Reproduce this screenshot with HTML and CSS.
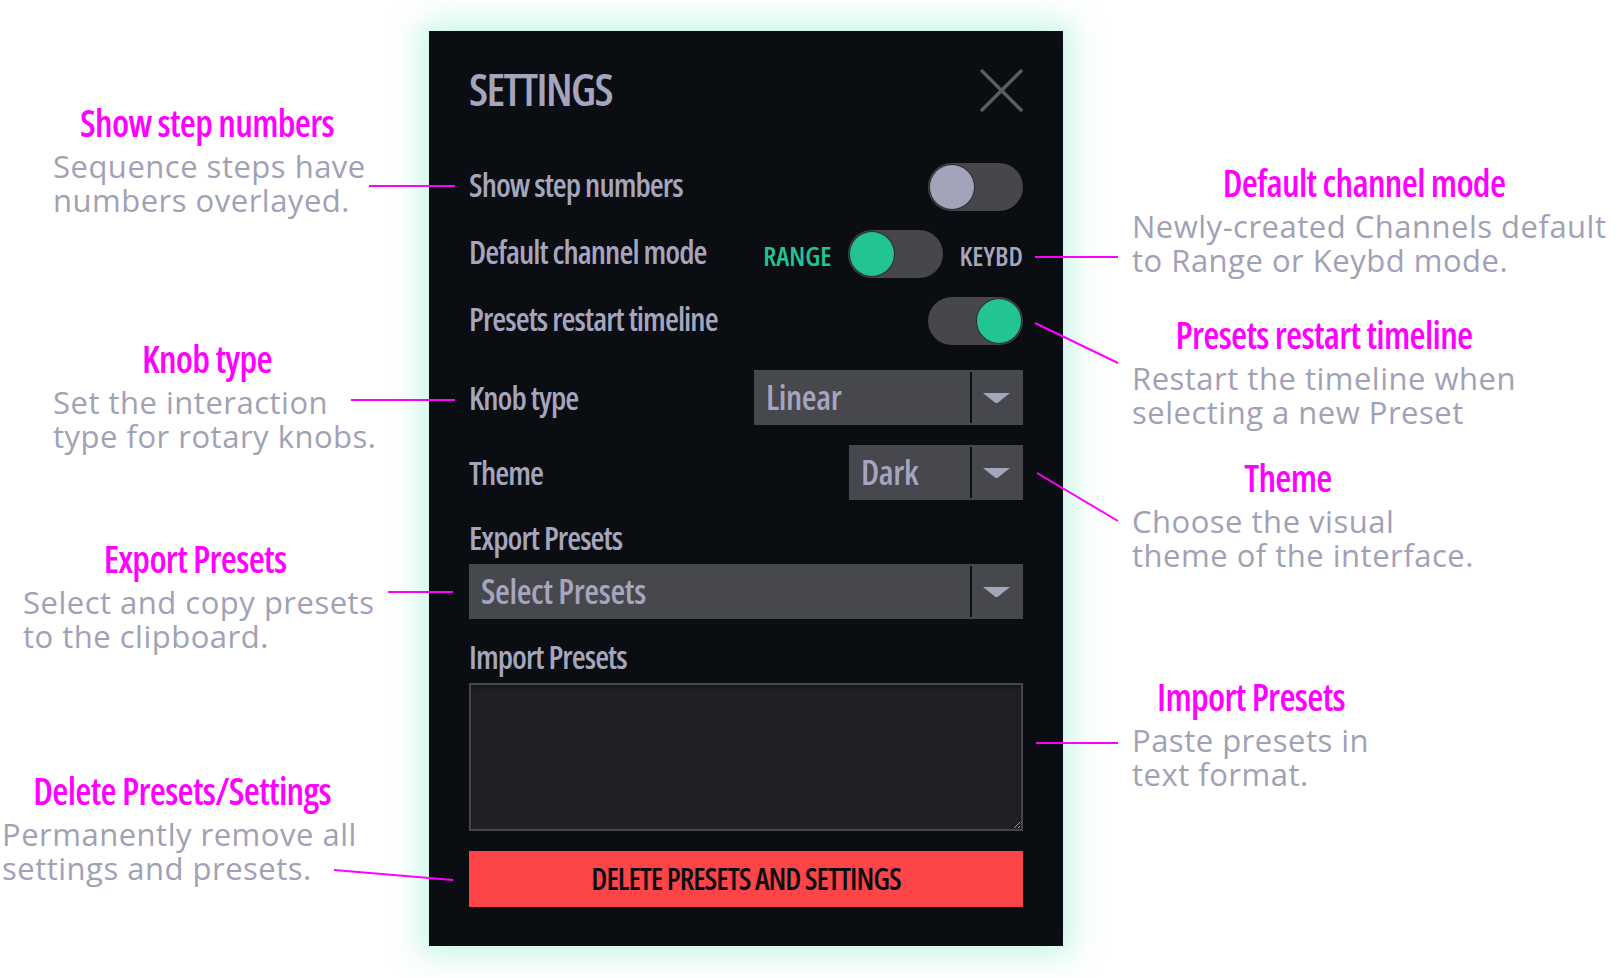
FILE: index.html
```html
<!DOCTYPE html>
<html lang="en">
<head>
<meta charset="utf-8">
<title>Settings</title>
<link rel="stylesheet" href="styles.css">
</head>
<body>
<div class="stage">
  <section class="panel">
    <header class="panel-header">
      <h1 class="title">SETTINGS</h1>
      <svg class="close" width="43" height="43" viewBox="0 0 43 43" aria-label="Close">
        <line x1="2" y1="2" x2="41" y2="41"/>
        <line x1="41" y1="2" x2="2" y2="41"/>
      </svg>
    </header>

    <div class="toggles">
      <div class="row toggle-row">
        <span class="label">Show step numbers</span>
        <span class="switch"><span class="knob off"></span></span>
      </div>
      <div class="row toggle-row">
        <span class="label">Default channel mode</span>
        <span class="mode">
          <span class="mode-text active">RANGE</span>
          <span class="switch"><span class="knob on"></span></span>
          <span class="mode-text">KEYBD</span>
        </span>
      </div>
      <div class="row toggle-row">
        <span class="label">Presets restart timeline</span>
        <span class="switch right"><span class="knob on"></span></span>
      </div>
    </div>

    <div class="row select-row first">
      <span class="label">Knob type</span>
      <div class="select knob-select">
        <span class="value">Linear</span>
        <span class="caret"><svg width="27" height="10" viewBox="0 0 27 10"><polygon points="0,0 27,0 14.5,10 12.5,10"/></svg></span>
      </div>
    </div>
    <div class="row select-row">
      <span class="label">Theme</span>
      <div class="select theme-select">
        <span class="value">Dark</span>
        <span class="caret"><svg width="27" height="10" viewBox="0 0 27 10"><polygon points="0,0 27,0 14.5,10 12.5,10"/></svg></span>
      </div>
    </div>

    <div class="label block-label">Export Presets</div>
    <div class="select wide-select">
      <span class="value">Select Presets</span>
      <span class="caret"><svg width="27" height="10" viewBox="0 0 27 10"><polygon points="0,0 27,0 14.5,10 12.5,10"/></svg></span>
    </div>

    <div class="label block-label">Import Presets</div>
    <textarea class="import"></textarea>

    <button class="delete">DELETE PRESETS AND SETTINGS</button>
  </section>

  <div class="note" style="left:53px;top:101px;width:308px">
    <h2>Show step numbers</h2>
    <p><span>Sequence steps have</span><span>numbers overlayed.</span></p>
  </div>
  <div class="note" style="left:53px;top:337px;width:308px">
    <h2>Knob type</h2>
    <p><span>Set the interaction</span><span>type for rotary knobs.</span></p>
  </div>
  <div class="note" style="left:23px;top:537px;width:344px">
    <h2>Export Presets</h2>
    <p><span>Select and copy presets</span><span>to the clipboard.</span></p>
  </div>
  <div class="note" style="left:2px;top:769px;width:360px">
    <h2>Delete Presets/Settings</h2>
    <p><span>Permanently remove all</span><span>settings and presets.</span></p>
  </div>
  <div class="note" style="left:1132px;top:161px;width:464px">
    <h2>Default channel mode</h2>
    <p><span>Newly-created Channels default</span><span>to Range or Keybd mode.</span></p>
  </div>
  <div class="note" style="left:1132px;top:313px;width:384px">
    <h2>Presets restart timeline</h2>
    <p><span>Restart the timeline when</span><span>selecting a new Preset</span></p>
  </div>
  <div class="note" style="left:1132px;top:456px;width:312px">
    <h2>Theme</h2>
    <p><span>Choose the visual</span><span>theme of the interface.</span></p>
  </div>
  <div class="note" style="left:1132px;top:675px;width:238px">
    <h2>Import Presets</h2>
    <p><span>Paste presets in</span><span>text format.</span></p>
  </div>

  <svg class="connectors" width="1622" height="978" viewBox="0 0 1622 978">
    <line x1="369" y1="186" x2="455" y2="186"/>
    <line x1="351" y1="400" x2="455" y2="400"/>
    <line x1="388" y1="592" x2="453" y2="592"/>
    <line x1="334" y1="870" x2="453" y2="880"/>
    <line x1="1035" y1="257" x2="1118" y2="257"/>
    <line x1="1035" y1="323" x2="1118" y2="363"/>
    <line x1="1037" y1="473" x2="1118" y2="521"/>
    <line x1="1036" y1="743" x2="1118" y2="743"/>
  </svg>
</div>
</body>
</html>
```
FILE: styles.css
```css
* { box-sizing: border-box; }
html, body { margin: 0; padding: 0; background: #ffffff; }
body { width: 1622px; height: 978px; overflow: hidden; }

.stage {
  position: relative;
  width: 1622px;
  height: 978px;
  padding: 31px 0 0 429px;
  font-family: "Open Sans", sans-serif;
}

/* ---------- panel ---------- */
.panel {
  width: 634px;
  height: 915px;
  padding: 38px 40px 39px 40px;
  background: #0a0d12;
  box-shadow: 0 0 30px 8px rgba(170, 240, 216, 0.7);
  display: flex;
  flex-direction: column;
  color: #a5a5bd;
  font-stretch: 75%;
}

.panel-header {
  height: 43px;
  display: flex;
  justify-content: space-between;
  align-items: center;
}
.title {
  margin: 0;
  font-size: 45px;
  font-weight: 600;
  letter-spacing: -1.6px;
  line-height: 43px;
  padding-bottom: 4px;
  color: #a5a5bd;
}
.close line { stroke: #5c5c5e; stroke-width: 3.5; stroke-linecap: round; }

.toggles {
  margin-top: 51px;
  display: flex;
  flex-direction: column;
  gap: 19px;
}
.row {
  display: flex;
  align-items: center;
  justify-content: space-between;
}
.toggle-row { height: 48px; }
.label {
  font-size: 32px;
  font-weight: 600;
  letter-spacing: -0.95px;
  line-height: 48px;
  color: #a5a5bd;
  white-space: nowrap;
}
.toggle-row .label { padding-bottom: 5px; }

.switch {
  width: 95px;
  height: 48px;
  border-radius: 24px;
  background: #46464c;
  padding: 2px;
  display: flex;
  justify-content: flex-start;
}
.switch.right { justify-content: flex-end; }
.knob {
  width: 44px;
  height: 44px;
  border-radius: 50%;
  box-shadow: 0 0 0 1px rgba(10, 13, 18, 0.45);
}
.knob.off { background: #a3a3b9; }
.knob.on { background: #21c492; }

.mode { display: flex; align-items: center; }
.mode-text {
  font-size: 27px;
  font-weight: 600;
  line-height: 48px;
  color: #a5a5bd;
  padding-top: 4px;
}
.mode-text.active { color: #21c492; margin-right: 17px; }
.mode .switch { margin-right: 16px; }

.select-row { height: 55px; margin-top: 25px; }
.select-row + .select-row { margin-top: 20px; }
.select-row .label { line-height: 55px; }

.select {
  height: 55px;
  background: #47474e;
  display: flex;
  align-items: stretch;
}
.knob-select { width: 269px; }
.theme-select { width: 174px; }
.wide-select { width: 100%; }
.value {
  flex: 1;
  padding-left: 12px;
  font-size: 34px;
  font-weight: 600;
  letter-spacing: -0.4px;
  line-height: 55px;
  color: #a5a5bd;
  white-space: nowrap;
}
.caret {
  width: 53px;
  margin: 2px 0;
  border-left: 2px solid #0a0d12;
  display: flex;
  align-items: center;
  justify-content: center;
  padding-right: 2px;
}
.caret polygon { fill: #a5a5bd; }

.block-label {
  line-height: 40px;
  margin-top: 18px;
  margin-bottom: 6px;
}

.import {
  display: block;
  width: 100%;
  height: 148px;
  margin: 0;
  background: #1f1f24;
  border: 2px solid #46464c;
  border-radius: 0;
  box-shadow: inset 0 3px 3px rgba(0, 0, 0, 0.25);
  resize: both;
  color-scheme: dark;
  outline: none;
}

.delete {
  margin-top: 20px;
  height: 56px;
  width: 100%;
  border: 0;
  border-radius: 0;
  background: #fd4448;
  color: #0a0d12;
  font-family: "Open Sans", sans-serif;
  font-stretch: 75%;
  font-size: 30px;
  font-weight: 600;
  letter-spacing: -1px;
  line-height: 56px;
  padding: 0;
}

/* ---------- annotations ---------- */
.note {
  position: absolute;
  font-family: "Open Sans", sans-serif;
}
.note h2 {
  margin: 0;
  font-size: 37px;
  font-weight: 600;
  font-stretch: 75%;
  letter-spacing: -0.7px;
  line-height: 44px;
  color: #ff00ff;
  text-align: center;
  white-space: nowrap;
}
.note p {
  margin: 4px 0 0 0;
  font-size: 31px;
  font-weight: 400;
  line-height: 34px;
  color: #a1a1b6;
  letter-spacing: 0.5px;
  white-space: nowrap;
}
.note p span { display: block; height: 34px; }

.connectors {
  position: absolute;
  left: 0;
  top: 0;
  pointer-events: none;
}
.connectors line { stroke: #ff00ff; stroke-width: 2; }
```
